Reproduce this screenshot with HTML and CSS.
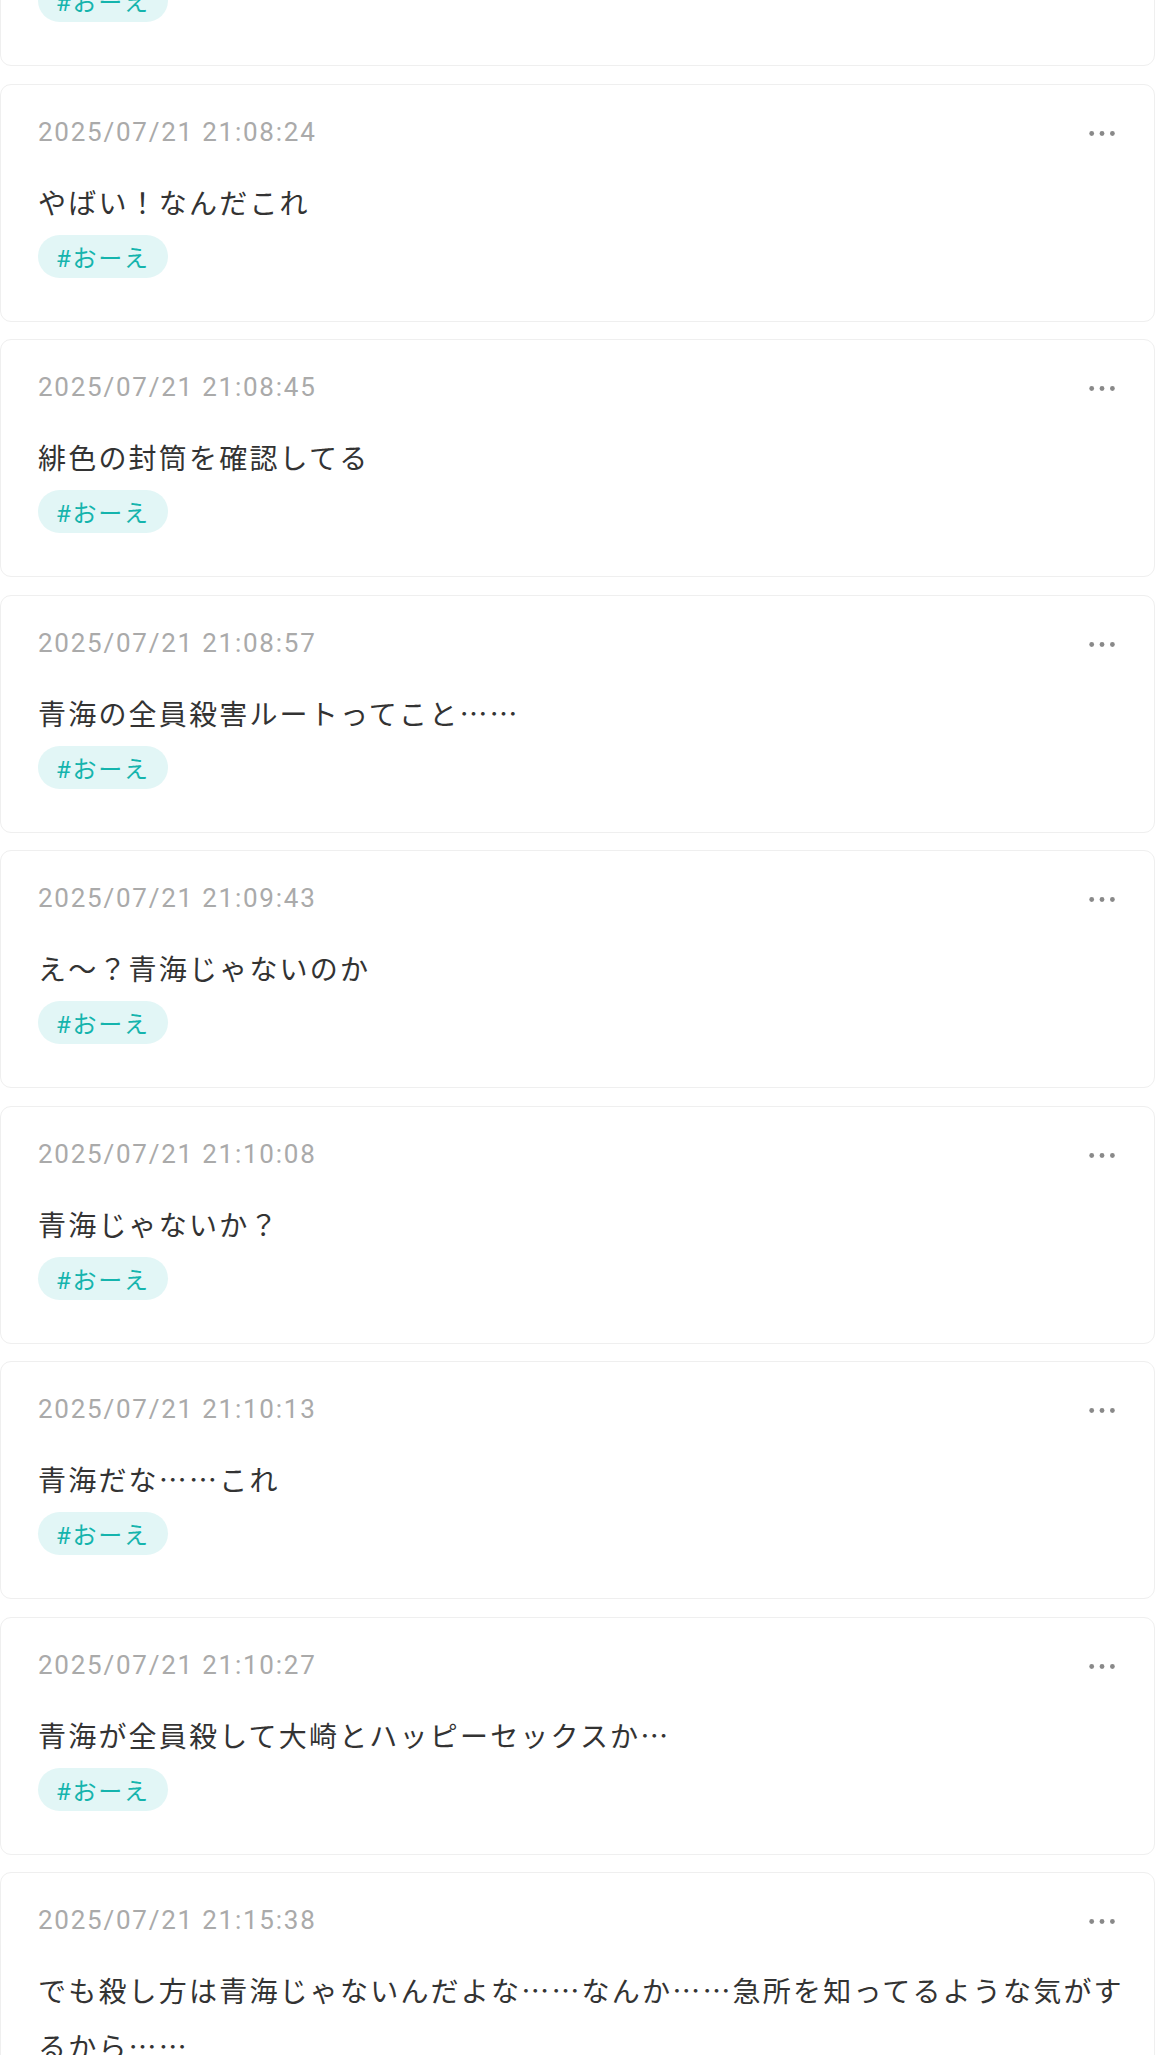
FILE: index.html
```html
<!DOCTYPE html>
<html lang="ja">
<head>
<meta charset="utf-8">
<title>メモ一覧</title>
<link rel="stylesheet" href="styles.css">
</head>
<body>
<main class="feed">
  <article class="card">
    <header class="card-head">
      <time class="stamp">2025/07/21 21:08:10</time>
      <button class="more" aria-label="メニュー"><svg width="30" height="10" viewBox="0 0 30 10"><circle cx="4.7" cy="6.5" r="2.4"/><circle cx="15" cy="6.5" r="2.4"/><circle cx="25.4" cy="6.5" r="2.4"/></svg></button>
    </header>
    <p class="body">始まった</p>
    <div class="tags"><span class="tag">#おーえ</span></div>
  </article>

  <article class="card">
    <header class="card-head">
      <time class="stamp">2025/07/21 21:08:24</time>
      <button class="more" aria-label="メニュー"><svg width="30" height="10" viewBox="0 0 30 10"><circle cx="4.7" cy="6.5" r="2.4"/><circle cx="15" cy="6.5" r="2.4"/><circle cx="25.4" cy="6.5" r="2.4"/></svg></button>
    </header>
    <p class="body">やばい！なんだこれ</p>
    <div class="tags"><span class="tag">#おーえ</span></div>
  </article>

  <article class="card">
    <header class="card-head">
      <time class="stamp">2025/07/21 21:08:45</time>
      <button class="more" aria-label="メニュー"><svg width="30" height="10" viewBox="0 0 30 10"><circle cx="4.7" cy="6.5" r="2.4"/><circle cx="15" cy="6.5" r="2.4"/><circle cx="25.4" cy="6.5" r="2.4"/></svg></button>
    </header>
    <p class="body">緋色の封筒を確認してる</p>
    <div class="tags"><span class="tag">#おーえ</span></div>
  </article>

  <article class="card">
    <header class="card-head">
      <time class="stamp">2025/07/21 21:08:57</time>
      <button class="more" aria-label="メニュー"><svg width="30" height="10" viewBox="0 0 30 10"><circle cx="4.7" cy="6.5" r="2.4"/><circle cx="15" cy="6.5" r="2.4"/><circle cx="25.4" cy="6.5" r="2.4"/></svg></button>
    </header>
    <p class="body">青海の全員殺害ルートってこと……</p>
    <div class="tags"><span class="tag">#おーえ</span></div>
  </article>

  <article class="card">
    <header class="card-head">
      <time class="stamp">2025/07/21 21:09:43</time>
      <button class="more" aria-label="メニュー"><svg width="30" height="10" viewBox="0 0 30 10"><circle cx="4.7" cy="6.5" r="2.4"/><circle cx="15" cy="6.5" r="2.4"/><circle cx="25.4" cy="6.5" r="2.4"/></svg></button>
    </header>
    <p class="body">え〜？青海じゃないのか</p>
    <div class="tags"><span class="tag">#おーえ</span></div>
  </article>

  <article class="card">
    <header class="card-head">
      <time class="stamp">2025/07/21 21:10:08</time>
      <button class="more" aria-label="メニュー"><svg width="30" height="10" viewBox="0 0 30 10"><circle cx="4.7" cy="6.5" r="2.4"/><circle cx="15" cy="6.5" r="2.4"/><circle cx="25.4" cy="6.5" r="2.4"/></svg></button>
    </header>
    <p class="body">青海じゃないか？</p>
    <div class="tags"><span class="tag">#おーえ</span></div>
  </article>

  <article class="card">
    <header class="card-head">
      <time class="stamp">2025/07/21 21:10:13</time>
      <button class="more" aria-label="メニュー"><svg width="30" height="10" viewBox="0 0 30 10"><circle cx="4.7" cy="6.5" r="2.4"/><circle cx="15" cy="6.5" r="2.4"/><circle cx="25.4" cy="6.5" r="2.4"/></svg></button>
    </header>
    <p class="body">青海だな……これ</p>
    <div class="tags"><span class="tag">#おーえ</span></div>
  </article>

  <article class="card">
    <header class="card-head">
      <time class="stamp">2025/07/21 21:10:27</time>
      <button class="more" aria-label="メニュー"><svg width="30" height="10" viewBox="0 0 30 10"><circle cx="4.7" cy="6.5" r="2.4"/><circle cx="15" cy="6.5" r="2.4"/><circle cx="25.4" cy="6.5" r="2.4"/></svg></button>
    </header>
    <p class="body">青海が全員殺して大崎とハッピーセックスか…</p>
    <div class="tags"><span class="tag">#おーえ</span></div>
  </article>

  <article class="card">
    <header class="card-head">
      <time class="stamp">2025/07/21 21:15:38</time>
      <button class="more" aria-label="メニュー"><svg width="30" height="10" viewBox="0 0 30 10"><circle cx="4.7" cy="6.5" r="2.4"/><circle cx="15" cy="6.5" r="2.4"/><circle cx="25.4" cy="6.5" r="2.4"/></svg></button>
    </header>
    <p class="body">でも殺し方は青海じゃないんだよな……なんか……急所を知ってるような気がするから……</p>
    <div class="tags"><span class="tag">#おーえ</span></div>
  </article>
</main>
</body>
</html>
```

FILE: styles.css
```css
html, body {
  margin: 0;
  padding: 0;
  background: #ffffff;
}

body {
  font-family: Roboto, "Noto Sans CJK JP", sans-serif;
  letter-spacing: 1.76px;
  color: #333333;
}

.feed {
  display: flex;
  flex-direction: column;
  gap: 17.5px;
  margin: -172px 1px 0 0;
}

.card {
  box-sizing: border-box;
  height: 238px;
  border: 1px solid #efefef;
  border-radius: 11px;
  background: #ffffff;
  padding: 28px 37px 0 37px;
  display: flex;
  flex-direction: column;
}

.card:last-child {
  height: auto;
}

.card-head {
  display: flex;
  align-items: center;
  justify-content: space-between;
  height: 38px;
  margin-bottom: 23px;
}

.stamp {
  font-family: Roboto, sans-serif;
  font-size: 26px;
  line-height: 38px;
  letter-spacing: 1.76px;
  color: #aaaaaa;
}

.more {
  border: 0;
  padding: 0;
  margin: 0;
  background: none;
  width: 30px;
  height: 10px;
  display: flex;
}

.more svg {
  fill: #898989;
}

.body {
  margin: 0 -20px 0 0;
  font-family: "Noto Sans CJK JP", sans-serif;
  font-size: 28px;
  line-height: 56px;
  letter-spacing: 2.2px;
  color: #333333;
}

.tags {
  display: flex;
  margin-top: 5px;
}

.tag {
  display: inline-flex;
  align-items: center;
  height: 43px;
  padding: 0 18px 0 18px;
  border-radius: 22px;
  background: #e2f6f6;
  color: #15b4ad;
  font-family: Roboto, "Noto Sans CJK JP", sans-serif;
  font-size: 24px;
  letter-spacing: 1.76px;
}
```
